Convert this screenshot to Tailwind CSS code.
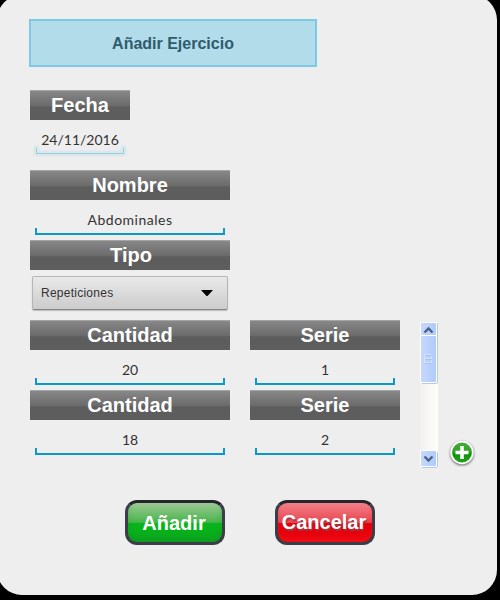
<!DOCTYPE html>
<html lang="es">
<head>
<meta charset="utf-8">
<title>Añadir Ejercicio</title>
<script src="https://cdn.jsdelivr.net/npm/@tailwindcss/browser@4"></script>
</head>
<body class="w-[500px] h-[600px] overflow-hidden bg-black font-['Liberation_Sans',Arial,sans-serif]">
<main class="-ml-[3px] w-[500px] h-[600px] -translate-y-[5px] rounded-[25px] bg-[#eeeeee] pl-[33px] pt-6 flex flex-col items-start">
  <h1 class="-ml-px w-[288px] h-12 shrink-0 border-2 border-[#7ccbe6] bg-[#b2dce9] flex items-center justify-center pt-0.5 text-base font-bold text-[#2f5b6e]">Añadir Ejercicio</h1>

  <section class="mt-[23px] w-[100px] h-20 shrink-0">
    <h2 class="h-[30px] border-t border-[#a5a5a5] bg-linear-to-b from-[#888888] from-0% via-[#6b6b6b] via-50% to-[#5d5d5d] to-55% text-center text-[20px] leading-[28px] font-bold text-white">Fecha</h2>
    <div class="relative h-10 text-center font-[Lato,sans-serif] text-sm leading-10 text-[#333333]">
      <svg class="absolute left-0 top-[24px]" width="100" height="15" fill="none"><path d="M6.500 4V9.500H93.500V4" stroke="#dce8eb" stroke-width="6" stroke-linejoin="round" stroke-linecap="round"/><path d="M6.500 4V9.500H93.500V4" stroke="#93cddd"/></svg>
      <span class="relative">24/11/2016</span>
    </div>
  </section>

  <section class="w-[200px] h-[70px] shrink-0">
    <h2 class="h-[30px] border-t border-[#a5a5a5] bg-linear-to-b from-[#888888] from-0% via-[#6b6b6b] via-50% to-[#5d5d5d] to-55% text-center text-[20px] leading-[28px] font-bold text-white">Nombre</h2>
    <div class="px-[5px]"><div class="h-[35px] bg-linear-to-r from-[#0a9aca] to-[#0a9aca] bg-[length:100%_2px] bg-bottom bg-no-repeat flex items-end justify-between"><i class="w-0.5 h-[7px] bg-[#0a9aca]"></i><span class="font-[Lato,sans-serif] text-sm tracking-[0.5px] leading-[30px] text-[#333333]">Abdominales</span><i class="w-0.5 h-[7px] bg-[#0a9aca]"></i></div></div>
  </section>

  <section class="w-[200px] h-20 shrink-0">
    <h2 class="h-[30px] border-t border-[#a5a5a5] bg-linear-to-b from-[#888888] from-0% via-[#6b6b6b] via-50% to-[#5d5d5d] to-55% text-center text-[20px] leading-[28px] font-bold text-white"><span class="relative left-px">Tipo</span></h2>
    <div class="mt-[6px] ml-[2px] w-[196px] h-[34px] rounded-[2px] border border-[#b5b5b5] border-b-[#858585] bg-linear-to-b from-[#e9e9e9] to-[#cccccc] shadow-[0_1px_1px_#bbbbbb] flex items-center justify-between pl-2 pr-[14px]">
      <span class="text-xs tracking-[0.25px] text-[#333333]">Repeticiones</span>
      <svg width="12" height="7"><path d="M0 0H12L6.500 6H5.500Z" fill="#000"/></svg>
    </div>
  </section>

  <section class="h-[150px] shrink-0 flex">
    <div class="grid grid-cols-[200px_150px] grid-rows-[70px_70px] gap-x-5">
      <div>
        <h2 class="h-[30px] border-t border-[#a5a5a5] bg-linear-to-b from-[#888888] from-0% via-[#6b6b6b] via-50% to-[#5d5d5d] to-55% text-center text-[20px] leading-[28px] font-bold text-white">Cantidad</h2>
        <div class="px-[5px]"><div class="h-[35px] bg-linear-to-r from-[#0a9aca] to-[#0a9aca] bg-[length:100%_2px] bg-bottom bg-no-repeat flex items-end justify-between"><i class="w-0.5 h-[7px] bg-[#0a9aca]"></i><span class="font-[Lato,sans-serif] text-sm leading-[30px] text-[#333333]">20</span><i class="w-0.5 h-[7px] bg-[#0a9aca]"></i></div></div>
      </div>
      <div>
        <h2 class="h-[30px] border-t border-[#a5a5a5] bg-linear-to-b from-[#888888] from-0% via-[#6b6b6b] via-50% to-[#5d5d5d] to-55% text-center text-[20px] leading-[28px] font-bold text-white">Serie</h2>
        <div class="px-[5px]"><div class="h-[35px] bg-linear-to-r from-[#0a9aca] to-[#0a9aca] bg-[length:100%_2px] bg-bottom bg-no-repeat flex items-end justify-between"><i class="w-0.5 h-[7px] bg-[#0a9aca]"></i><span class="font-[Lato,sans-serif] text-sm leading-[30px] text-[#333333]">1</span><i class="w-0.5 h-[7px] bg-[#0a9aca]"></i></div></div>
      </div>
      <div>
        <h2 class="h-[30px] border-t border-[#a5a5a5] bg-linear-to-b from-[#888888] from-0% via-[#6b6b6b] via-50% to-[#5d5d5d] to-55% text-center text-[20px] leading-[28px] font-bold text-white">Cantidad</h2>
        <div class="px-[5px]"><div class="h-[35px] bg-linear-to-r from-[#0a9aca] to-[#0a9aca] bg-[length:100%_2px] bg-bottom bg-no-repeat flex items-end justify-between"><i class="w-0.5 h-[7px] bg-[#0a9aca]"></i><span class="font-[Lato,sans-serif] text-sm leading-[30px] text-[#333333]">18</span><i class="w-0.5 h-[7px] bg-[#0a9aca]"></i></div></div>
      </div>
      <div>
        <h2 class="h-[30px] border-t border-[#a5a5a5] bg-linear-to-b from-[#888888] from-0% via-[#6b6b6b] via-50% to-[#5d5d5d] to-55% text-center text-[20px] leading-[28px] font-bold text-white">Serie</h2>
        <div class="px-[5px]"><div class="h-[35px] bg-linear-to-r from-[#0a9aca] to-[#0a9aca] bg-[length:100%_2px] bg-bottom bg-no-repeat flex items-end justify-between"><i class="w-0.5 h-[7px] bg-[#0a9aca]"></i><span class="font-[Lato,sans-serif] text-sm leading-[30px] text-[#333333]">2</span><i class="w-0.5 h-[7px] bg-[#0a9aca]"></i></div></div>
      </div>
    </div>

    <!-- Scrollbar -->
    <svg class="ml-5 mt-[2px]" width="18" height="146" viewBox="0 0 18 146">
      <defs>
        <linearGradient id="track"><stop stop-color="#f1f0ec"/><stop offset="1" stop-color="#fefefb"/></linearGradient>
        <linearGradient id="thumb"><stop stop-color="#c8d7fc"/><stop offset="1" stop-color="#afcbfc"/></linearGradient>
      </defs>
      <rect width="18" height="146" fill="url(#track)"/>
      <path d="M17.500 1V60Q17.500 61.500 16 61.500H2M17.500 130V144Q17.500 145.500 16 145.500H2" fill="none" stroke="#b4caec"/>
      <rect x=".5" y=".5" width="16" height="13" rx="1.500" fill="url(#thumb)" stroke="#fff"/>
      <rect x=".5" y="13.500" width="16" height="47" rx="1.500" fill="url(#thumb)" stroke="#fff"/>
      <rect x=".5" y="128.500" width="16" height="16" rx="1.500" fill="url(#thumb)" stroke="#fff"/>
      <path d="M4.500 10.500L8.500 6.500L12.500 10.500M4.500 134.500L8.500 138.500L12.500 134.500" fill="none" stroke="#4d6185" stroke-width="2.400"/>
      <path d="M4 32.500H11.500V40.500H4.500V32.500M4 36.500H12" fill="none" stroke="#d5e2fe"/>
      <path d="M5 33.500H12M5 37.500H12M5 41.500H12" stroke="#9fbdf5" stroke-width=".7"/>
    </svg>

    <svg class="ml-[10px] mt-[119px]" width="28" height="28" viewBox="0 0 28 28">
      <defs>
        <linearGradient id="plus" x2="0" y2="1"><stop stop-color="#45aa38"/><stop offset=".5" stop-color="#30a126"/><stop offset=".55" stop-color="#0b930b"/><stop offset="1" stop-color="#23a01b"/></linearGradient>
        <filter id="soft" x="-20%" y="-20%" width="140%" height="140%"><feGaussianBlur stdDeviation=".8"/></filter>
      </defs>
      <circle cx="14" cy="14.500" r="12" fill="#777" filter="url(#soft)"/>
      <circle cx="14" cy="13.500" r="11.700" fill="#fff"/>
      <circle cx="14" cy="13.500" r="9.900" fill="url(#plus)"/>
      <path d="M14 7V20M7.500 13.500H20.500" stroke="#fff" stroke-width="3.600"/>
    </svg>
  </section>

  <div class="mt-[30px] ml-[95px] flex gap-[50px]">
    <button class="w-[100px] h-[45px] rounded-[12px] border-[3px] border-[#3b3e46] border-t-[#24262b] bg-linear-to-b from-[#9bc794] from-0% via-[#42b548] via-50% to-[#08b31b] to-52% shadow-[inset_0_-9px_10px_-5px_#109722] text-[20px] font-bold text-white"><span class="relative -left-px">Añadir</span></button>
    <button class="w-[100px] h-[45px] rounded-[12px] border-[3px] border-[#3b3e46] border-t-[#24262b] bg-linear-to-b from-[#f27e88] from-0% via-[#e84350] via-50% to-[#e5000c] to-52% shadow-[inset_0_-8px_8px_-5px_#f51118] text-[20px] font-bold text-white whitespace-nowrap [text-shadow:1px_2px_1px_#a03a40]"><span class="relative -left-px -top-px -mx-2">Cancelar</span></button>
  </div>
</main>
</body>
</html>
